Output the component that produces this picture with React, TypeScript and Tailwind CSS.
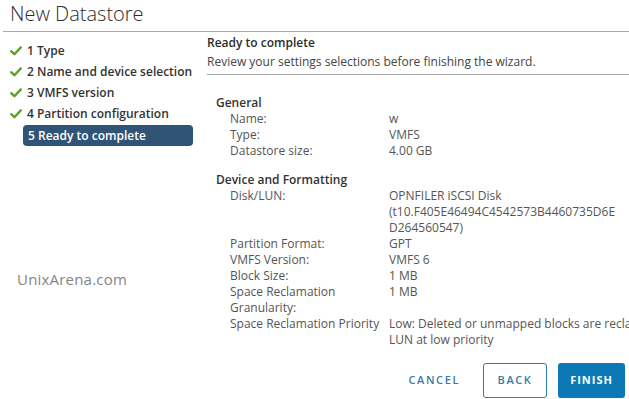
import React from "react";

const font = { fontFamily: '"Open Sans", "Noto Sans", Arial, sans-serif' };

function Check() {
  return (
    <svg width="12" height="10" viewBox="0 0 12 10" className="shrink-0">
      <path d="M1.2 5.2 L4.4 8.2 L10.8 1.4" fill="none" stroke="#5ea224" strokeWidth="2.4" strokeLinecap="round" strokeLinejoin="round" />
    </svg>
  );
}

const steps = ["1 Type", "2 Name and device selection", "3 VMFS version", "4 Partition configuration"];

function Row({ label, lines }: { label: string[]; lines: string[] }) {
  const n = Math.max(label.length, lines.length);
  return (
    <div className="flex">
      <div className="w-[159px] shrink-0">
        {Array.from({ length: n }).map((_, i) => (
          <div key={i} className="h-[16px] leading-[16px] whitespace-nowrap">{label[i] ?? ""}</div>
        ))}
      </div>
      <div className="shrink-0">
        {lines.map((l, i) => (
          <div key={i} className="h-[16px] leading-[16px] whitespace-nowrap">{l}</div>
        ))}
      </div>
    </div>
  );
}

export default function App() {
  return (
    <div className="w-[629px] h-[399px] bg-white overflow-hidden text-[#333]" style={font}>
      <div className="h-[31px] pl-[10px] text-[20px] font-light leading-[28px] text-[#2c2c2c]">New Datastore</div>
      <div className="h-px bg-[#a8a8a8] ml-[3px]" />
      <div className="flex">
        <div className="w-[200px] shrink-0 pt-[8px]">
          {steps.map((s) => (
            <div key={s} className="h-[21px] flex items-center pl-[10px] gap-[5px] text-[12px] font-semibold text-[#333]">
              <Check />
              <span className="whitespace-nowrap">{s}</span>
            </div>
          ))}
          <div className="h-[21px] ml-[23px] w-[170px] mt-[1px] rounded-[4px] bg-[#2f5476] flex items-center pl-[5px] text-[12px] font-semibold text-white whitespace-nowrap">
            5 Ready to complete
          </div>
          <div className="mt-[124px] pl-[17px] text-[15px] leading-[18px] text-[#858585] tracking-[0.2px]">UnixArena.com</div>
        </div>
        <div className="flex-1 min-w-0 overflow-hidden">
          <div className="pl-[7px] pt-[2px]">
            <div className="h-[18px] leading-[18px] text-[12px] font-semibold text-[#2c2c2c] whitespace-nowrap">Ready to complete</div>
            <div className="mt-[1px] h-[21px] leading-[18px] text-[12px] text-[#444] whitespace-nowrap">Review your settings selections before finishing the wizard.</div>
            <div className="h-px bg-[#a8a8a8]" />
          </div>
          <div className="pl-[16px] pt-[19px] text-[12px] text-[#555]">
            <div className="h-[17px] leading-[17px] font-semibold text-[#333]">General</div>
            <div className="pl-[14px]">
              <Row label={["Name:"]} lines={["w"]} />
              <Row label={["Type:"]} lines={["VMFS"]} />
              <Row label={["Datastore size:"]} lines={["4.00 GB"]} />
            </div>
            <div className="mt-[12px] h-[17px] leading-[17px] font-semibold text-[#333]">Device and Formatting</div>
            <div className="pl-[14px]">
              <Row label={["Disk/LUN:"]} lines={["OPNFILER iSCSI Disk", "(t10.F405E46494C4542573B4460735D6E", "D264560547)"]} />
              <Row label={["Partition Format:"]} lines={["GPT"]} />
              <Row label={["VMFS Version:"]} lines={["VMFS 6"]} />
              <Row label={["Block Size:"]} lines={["1 MB"]} />
              <Row label={["Space Reclamation", "Granularity:"]} lines={["1 MB"]} />
              <Row label={["Space Reclamation Priority"]} lines={["Low: Deleted or unmapped blocks are reclaimed on the", "LUN at low priority"]} />
            </div>
          </div>
          <div className="mt-[15px] flex justify-end items-center pr-[4px] gap-[11px]">
            <button className="h-[35px] px-[8px] text-[11px] font-semibold tracking-[1.6px] text-[#3a7aa3] mr-[4px]">CANCEL</button>
            <button className="h-[35px] w-[64px] rounded-[3px] border border-[#2e7eae] text-[11px] font-semibold tracking-[1.6px] text-[#3a7aa3]">BACK</button>
            <button className="h-[35px] w-[67px] rounded-[3px] bg-[#0a79b6] text-[11px] font-bold tracking-[1px] text-white">FINISH</button>
          </div>
        </div>
      </div>
    </div>
  );
}
